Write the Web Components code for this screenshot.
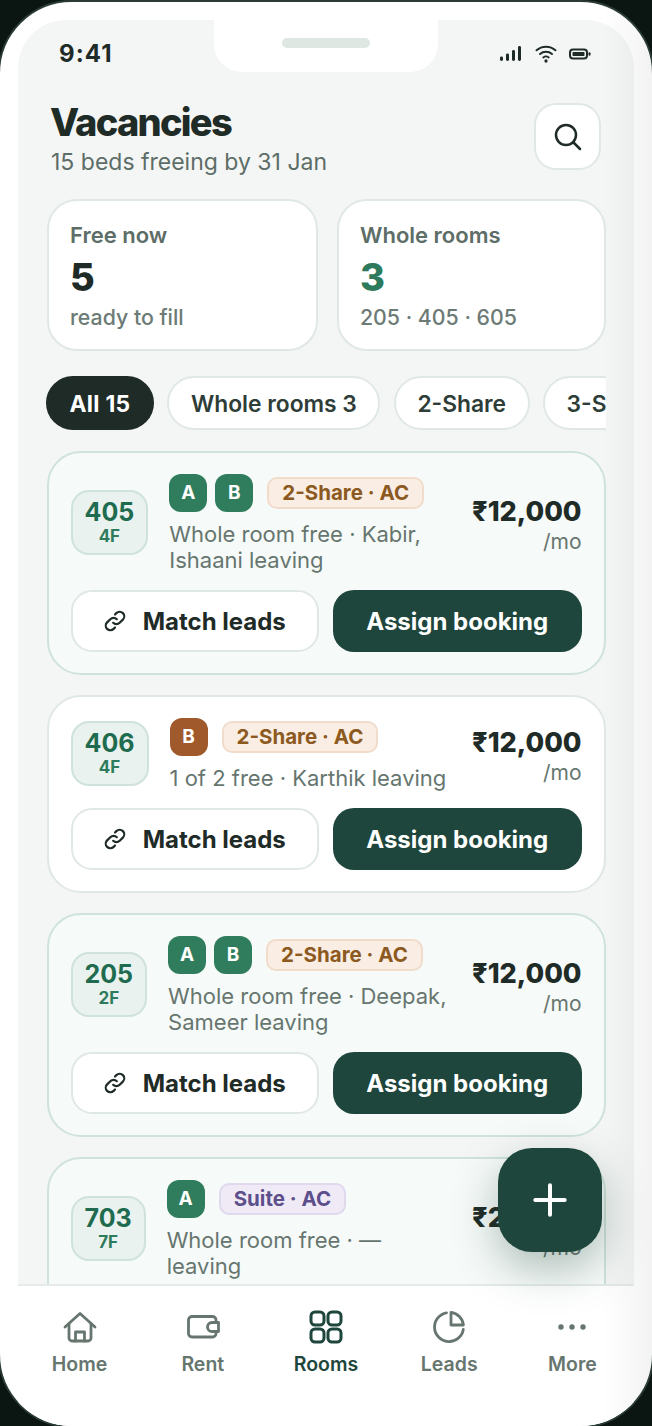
<!doctype html>
<html><head><meta charset="utf-8"><title>Vacancies</title>
<style>
html,body{margin:0;padding:0;background:#0b1512;width:652px;height:1426px;overflow:hidden}
body{font-family:Inter,"Noto Sans",sans-serif;color:#1f2b27}
</style></head><body>
<phone-frame>
  <status-bar></status-bar>
  <app-header title="Vacancies" sub="15 beds freeing by 31 Jan"></app-header>
  <stat-row>
    <stat-card label="Free now" value="5" note="ready to fill"></stat-card>
    <stat-card label="Whole rooms" value="3" note="205 · 405 · 605" tone="green"></stat-card>
  </stat-row>
  <chip-strip>
    <filter-chip active>All 15</filter-chip>
    <filter-chip>Whole rooms 3</filter-chip>
    <filter-chip>2-Share</filter-chip>
    <filter-chip>3-Share</filter-chip>
  </chip-strip>
  <room-list>
    <room-card room="405" floor="4F" beds="A,B" tag="2-Share · AC" tone="warm" info="Whole room free · Kabir, Ishaani leaving" price="₹12,000" whole></room-card>
    <room-card room="406" floor="4F" beds="B" bedtone="brown" tag="2-Share · AC" tone="warm" info="1 of 2 free · Karthik leaving" price="₹12,000"></room-card>
    <room-card room="205" floor="2F" beds="A,B" tag="2-Share · AC" tone="warm" info="Whole room free · Deepak, Sameer leaving" price="₹12,000" whole></room-card>
    <room-card room="703" floor="7F" beds="A" tag="Suite · AC" tone="violet" info="Whole room free · — leaving" price="₹21,000" whole cut></room-card>
  </room-list>
  <bottom-nav slot="nav">
    <nav-item label="Home" icon="home"></nav-item>
    <nav-item label="Rent" icon="wallet"></nav-item>
    <nav-item label="Rooms" icon="grid" active></nav-item>
    <nav-item label="Leads" icon="pie"></nav-item>
    <nav-item label="More" icon="dots"></nav-item>
  </bottom-nav>
  <add-fab slot="over"></add-fab>
</phone-frame>
<script>
function def(name, render){
  customElements.define(name, class extends HTMLElement{
    connectedCallback(){
      if(this.shadowRoot) return;
      this.attachShadow({mode:'open'}).innerHTML = render(this);
    }
  });
}
const a=(el,n)=>el.getAttribute(n)||'';

def('phone-frame',()=>`<style>
:host{display:block;width:652px;height:1426px;position:relative;overflow:hidden}
.frame{position:absolute;left:-2px;top:0;width:656px;height:1428px;box-sizing:border-box;border:2px solid #2b3c37;border-radius:74px;background:#fff;overflow:hidden}
.screen{position:absolute;left:18px;right:18px;top:18px;bottom:0;display:flex;flex-direction:column;background:#f4f6f5;border-radius:48px 48px 0 0;overflow:hidden}
.body{flex:1;min-height:0;overflow:hidden;display:flex;flex-direction:column}
.notch{position:absolute;left:214px;top:20px;width:224px;height:52px;background:#fff;border-radius:0 0 28px 28px;display:flex;justify-content:center;padding-top:18px;box-sizing:border-box}
.pill{width:88px;height:10px;border-radius:5px;background:#dfe7e3}
.nav{flex:none}
.sheen{position:absolute;right:0;top:0;bottom:0;width:50px;background:linear-gradient(90deg,rgba(20,30,28,0),rgba(20,30,28,.055));pointer-events:none}
</style>
<div class="frame"><div class="screen"><div class="body"><slot></slot></div><div class="nav"><slot name="nav"></slot></div></div><div class="sheen"></div></div>
<div class="notch"><div class="pill"></div></div>
<slot name="over"></slot>`);

def('status-bar',()=>`<style>
:host{display:flex;justify-content:space-between;align-items:center;height:30px;padding:19px 42px 0 41px;flex:none}
.t{font:700 24px/30px Inter,sans-serif;color:#1f2b27;letter-spacing:1.1px}
.i{display:flex;align-items:center;gap:10px;margin-top:-1px}
svg{display:block}
.sig{margin-right:2px}
</style><span class="t">9:41</span><span class="i">
<svg class="sig" width="24" height="18" viewBox="0 0 24 18"><g fill="#1f2b27"><rect x="2" y="11.500" width="3" height="4.500" rx="1.400"/><rect x="8" y="8.500" width="3" height="7.500" rx="1.400"/><rect x="14" y="5" width="3" height="11" rx="1.400"/><rect x="20" y="1" width="3" height="15" rx="1.400"/></g></svg>
<svg width="24" height="20" viewBox="0 0 24 20" fill="none" stroke="#1f2b27" stroke-width="1.900" stroke-linecap="round"><path d="M2.500 6.300C7.800 1.500 16.200 1.500 21.500 6.300"/><path d="M6 10C9.400 7 14.600 7 18 10"/><path d="M9.300 13.400C10.900 12.200 13.100 12.200 14.700 13.400"/><circle cx="12" cy="17" r=".7" fill="#1f2b27"/></svg>
<svg width="24" height="14" viewBox="0 0 24 14"><rect x="2" y="2.500" width="17" height="9" rx="3" fill="none" stroke="#1f2b27" stroke-width="2"/><rect x="4.500" y="5" width="12" height="4" rx=".8" fill="#1f2b27"/><rect x="20.500" y="5.200" width="2" height="3.600" rx="1" fill="#1f2b27"/></svg>
</span>`);

def('app-header',el=>`<style>
:host{display:flex;justify-content:space-between;align-items:flex-start;padding:31px 33px 0 33px;flex:none}
h1{margin:0 0 0 -1px;font:800 38px/44px Inter,sans-serif;letter-spacing:-1.750px;color:#1f2b27}
p{margin:4px 0 0;font:400 23px/28px Inter,sans-serif;color:#5d6d67}
.s{box-sizing:border-box;width:67px;height:67px;margin-top:3px;background:#fff;border:2px solid #e0e8e5;border-radius:22px;display:flex;align-items:center;justify-content:center}
</style><div><h1>${a(el,'title')}</h1><p>${a(el,'sub')}</p></div>
<div class="s"><svg width="30" height="30" viewBox="0 0 30 30" fill="none" stroke="#1f2b27" stroke-width="2.500" stroke-linecap="round"><circle cx="13" cy="13" r="10"/><path d="M20.500 20.500L27 27"/></svg></div>`);

def('stat-row',()=>`<style>:host{display:grid;grid-template-columns:271px 269px;gap:19px;padding:23px 28.5px 0 28.5px;flex:none}</style><slot></slot>`);

def('stat-card',el=>`<style>
:host{display:block;box-sizing:border-box;height:152px;background:#fff;border:2px solid #e0e8e5;border-radius:30px;padding:19px 21.500px}
.l{font:600 22px/30px Inter,sans-serif;color:#5d6d67}
.v{font:800 38px/46px Inter,sans-serif;color:${a(el,'tone')==='green'?'#2d7a5c':'#1f2b27'};margin-top:4px}
.n{font:500 21.300px/30px Inter,sans-serif;color:#6c7b75;margin-top:2px}
</style><div class="l">${a(el,'label')}</div><div class="v">${a(el,'value')}</div><div class="n">${a(el,'note')}</div>`);

def('chip-strip',()=>`<style>:host{display:flex;gap:13.5px;margin:25px 28px 0 28px;overflow:hidden;flex:none}</style><slot></slot>`);

def('filter-chip',el=>{const on=el.hasAttribute('active');return `<style>
:host{flex:none;box-sizing:border-box;height:54px;padding:2px 21.500px 0;display:flex;align-items:center;border-radius:27px;font:${on?700:600} 22.800px/1 Inter,sans-serif;letter-spacing:${on?.3:0}px;
 background:${on?'#1f2b27':'#fff'};color:${on?'#fff':'#2e3d38'};border:2px solid ${on?'#1f2b27':'#e0e8e5'}}
</style><slot></slot>`});

def('room-list',()=>`<style>:host{display:flex;flex-direction:column;gap:20px;padding:20.500px 28.500px 0 28.500px;flex:1;min-height:0}</style><slot></slot>`);

def('room-card',el=>{
 const whole=el.hasAttribute('whole');
 const cut=el.hasAttribute('cut');
 const beds=a(el,'beds').split(',');
 const bedbg=a(el,'bedtone')==='brown'?'#a0592b':'#2f7d5d';
 const tone=a(el,'tone')==='violet'?['#efeaf6','#e0d9ee','#5d4f8c']:['#f9ede4','#f1dccb','#8c5a20'];
 return `<style>
:host{display:block;flex:none;box-sizing:border-box;background:${whole?'#f6faf8':'#fff'};border:2px solid ${whole?'#cfe3da':'#e0e8e5'};border-radius:34px;padding:21px 22px ${cut?70:21}px}
.top{display:flex;align-items:center;gap:21px}
.tile{flex:none;box-sizing:border-box;background:#e9f2ee;border:2px solid #cfe3da;border-radius:18px;padding:5px 12px 8px;text-align:center}
.r{font:700 25px/30px Inter,sans-serif;color:#1f6b4f}
.f{font:700 17px/18px Inter,sans-serif;color:#2d7a5c}
.mid{flex:1;min-width:0}
.bd{display:flex;align-items:center;gap:14px;height:38px}
.bs{display:flex;gap:8px}
.b{width:38px;height:38px;border-radius:12px;background:${bedbg};color:#fff;display:flex;align-items:center;justify-content:center;font:700 19px/1 Inter,sans-serif}
.tag{box-sizing:border-box;height:32px;padding:2px 13px 0;display:flex;align-items:center;background:${tone[0]};border:2px solid ${tone[1]};border-radius:10px;color:${tone[2]};font:700 20.500px/1 Inter,sans-serif;white-space:nowrap}
.info{margin:9px 0 -2px;font:400 22px/26px Inter,sans-serif;color:#66766f}
.price{flex:none;text-align:right;margin-top:6px}
.p{font:800 27px/32px Inter,sans-serif;color:#1f2b27}
.m{font:400 21px/27px Inter,sans-serif;color:#66766f}
.acts{display:grid;grid-template-columns:1fr 1fr;gap:14px;margin-top:19px}
.btn{box-sizing:border-box;height:62px;padding-top:2px;border-radius:21px;display:flex;align-items:center;justify-content:center;font:700 24px/1 Inter,sans-serif}
.btn svg{margin-top:-2px}
.o{background:#fff;border:2px solid #e0e8e5;color:#1f2b27;gap:17px}
.s{background:#1f463c;color:#fff}
</style>
<div class="top">
 <div class="tile"><div class="r">${a(el,'room')}</div><div class="f">${a(el,'floor')}</div></div>
 <div class="mid"><div class="bd"><div class="bs">${beds.map(b=>`<div class="b">${b}</div>`).join('')}</div><div class="tag">${a(el,'tag')}</div></div><div class="info">${a(el,'info')}</div></div>
 <div class="price"><div class="p">${a(el,'price')}</div><div class="m">/mo</div></div>
</div>
${cut?'':`<div class="acts"><div class="btn o"><svg width="22" height="22" viewBox="0 0 24 24" fill="none" stroke="#1f2b27" stroke-width="2.400" stroke-linecap="round" stroke-linejoin="round"><path d="M10 14a5 5 0 0 0 7.100 0l3.500-3.500a5 5 0 0 0-7.100-7.100l-1.500 1.500"/><path d="M14 10a5 5 0 0 0-7.100 0l-3.500 3.500a5 5 0 0 0 7.100 7.100l1.500-1.500"/></svg>Match leads</div><div class="btn s">Assign booking</div></div>`}`});

def('add-fab',()=>`<style>
:host{position:absolute;left:498px;top:1148px;width:104px;height:104px;border-radius:34px;background:#1f463c;box-shadow:0 16px 44px rgba(31,70,60,.34);display:flex;align-items:center;justify-content:center}
</style><svg width="36" height="36" viewBox="0 0 36 36" stroke="#fff" stroke-width="4" stroke-linecap="round"><path d="M18 3.300v29.400M3.300 18h29.400"/></svg>`);

def('bottom-nav',()=>`<style>:host{display:grid;grid-template-columns:repeat(5,1fr);box-sizing:border-box;height:142px;background:#fff;border-top:2px solid #e4ebe8;padding-top:24px}</style><slot></slot>`);

const ICONS={
home:`<path d="M2 17L17 3.500 32 17"/><path d="M6 14v14a3 3 0 0 0 3 3h16a3 3 0 0 0 3-3V14"/><path d="M12.500 31v-9h9v9"/>`,
wallet:`<path d="M30 12v-2a3.500 3.500 0 0 0-3.500-3.500H6A3.500 3.500 0 0 0 2.500 10v13.500A3.500 3.500 0 0 0 6 27h20.500a3.500 3.500 0 0 0 3.500-3.500v-2"/><path d="M32.500 12.500H26a4.500 4.500 0 0 0 0 9h6.500z"/>`,
grid:`<rect x="2" y="2" width="13" height="13" rx="4"/><rect x="19" y="2" width="13" height="13" rx="4"/><rect x="2" y="19" width="13" height="13" rx="4"/><rect x="19" y="19" width="13" height="13" rx="4"/>`,
pie:`<path d="M14.500 2.800A14.500 14.500 0 1 0 31.300 19.500"/><path d="M19 2.400A14.500 14.500 0 0 1 31.400 15H19z"/>`,
dots:`<circle cx="6" cy="17" r="2.700" fill="C" stroke="none"/><circle cx="17" cy="17" r="2.700" fill="C" stroke="none"/><circle cx="28" cy="17" r="2.700" fill="C" stroke="none"/>`
};
def('nav-item',el=>{const on=el.hasAttribute('active');const c=on?'#1f463c':'#66766f';return `<style>
:host{display:flex;flex-direction:column;align-items:center;gap:6px}
svg{display:block}
span{font:600 19.500px/28px Inter,sans-serif;color:${c}}
</style><svg width="34" height="34" viewBox="0 0 34 34" fill="none" stroke="${c}" stroke-width="${on?3:2.800}" stroke-linecap="round" stroke-linejoin="round">${ICONS[a(el,'icon')].replaceAll('"C"','"'+c+'"')}</svg><span>${a(el,'label')}</span>`});
</script>
</body></html>
